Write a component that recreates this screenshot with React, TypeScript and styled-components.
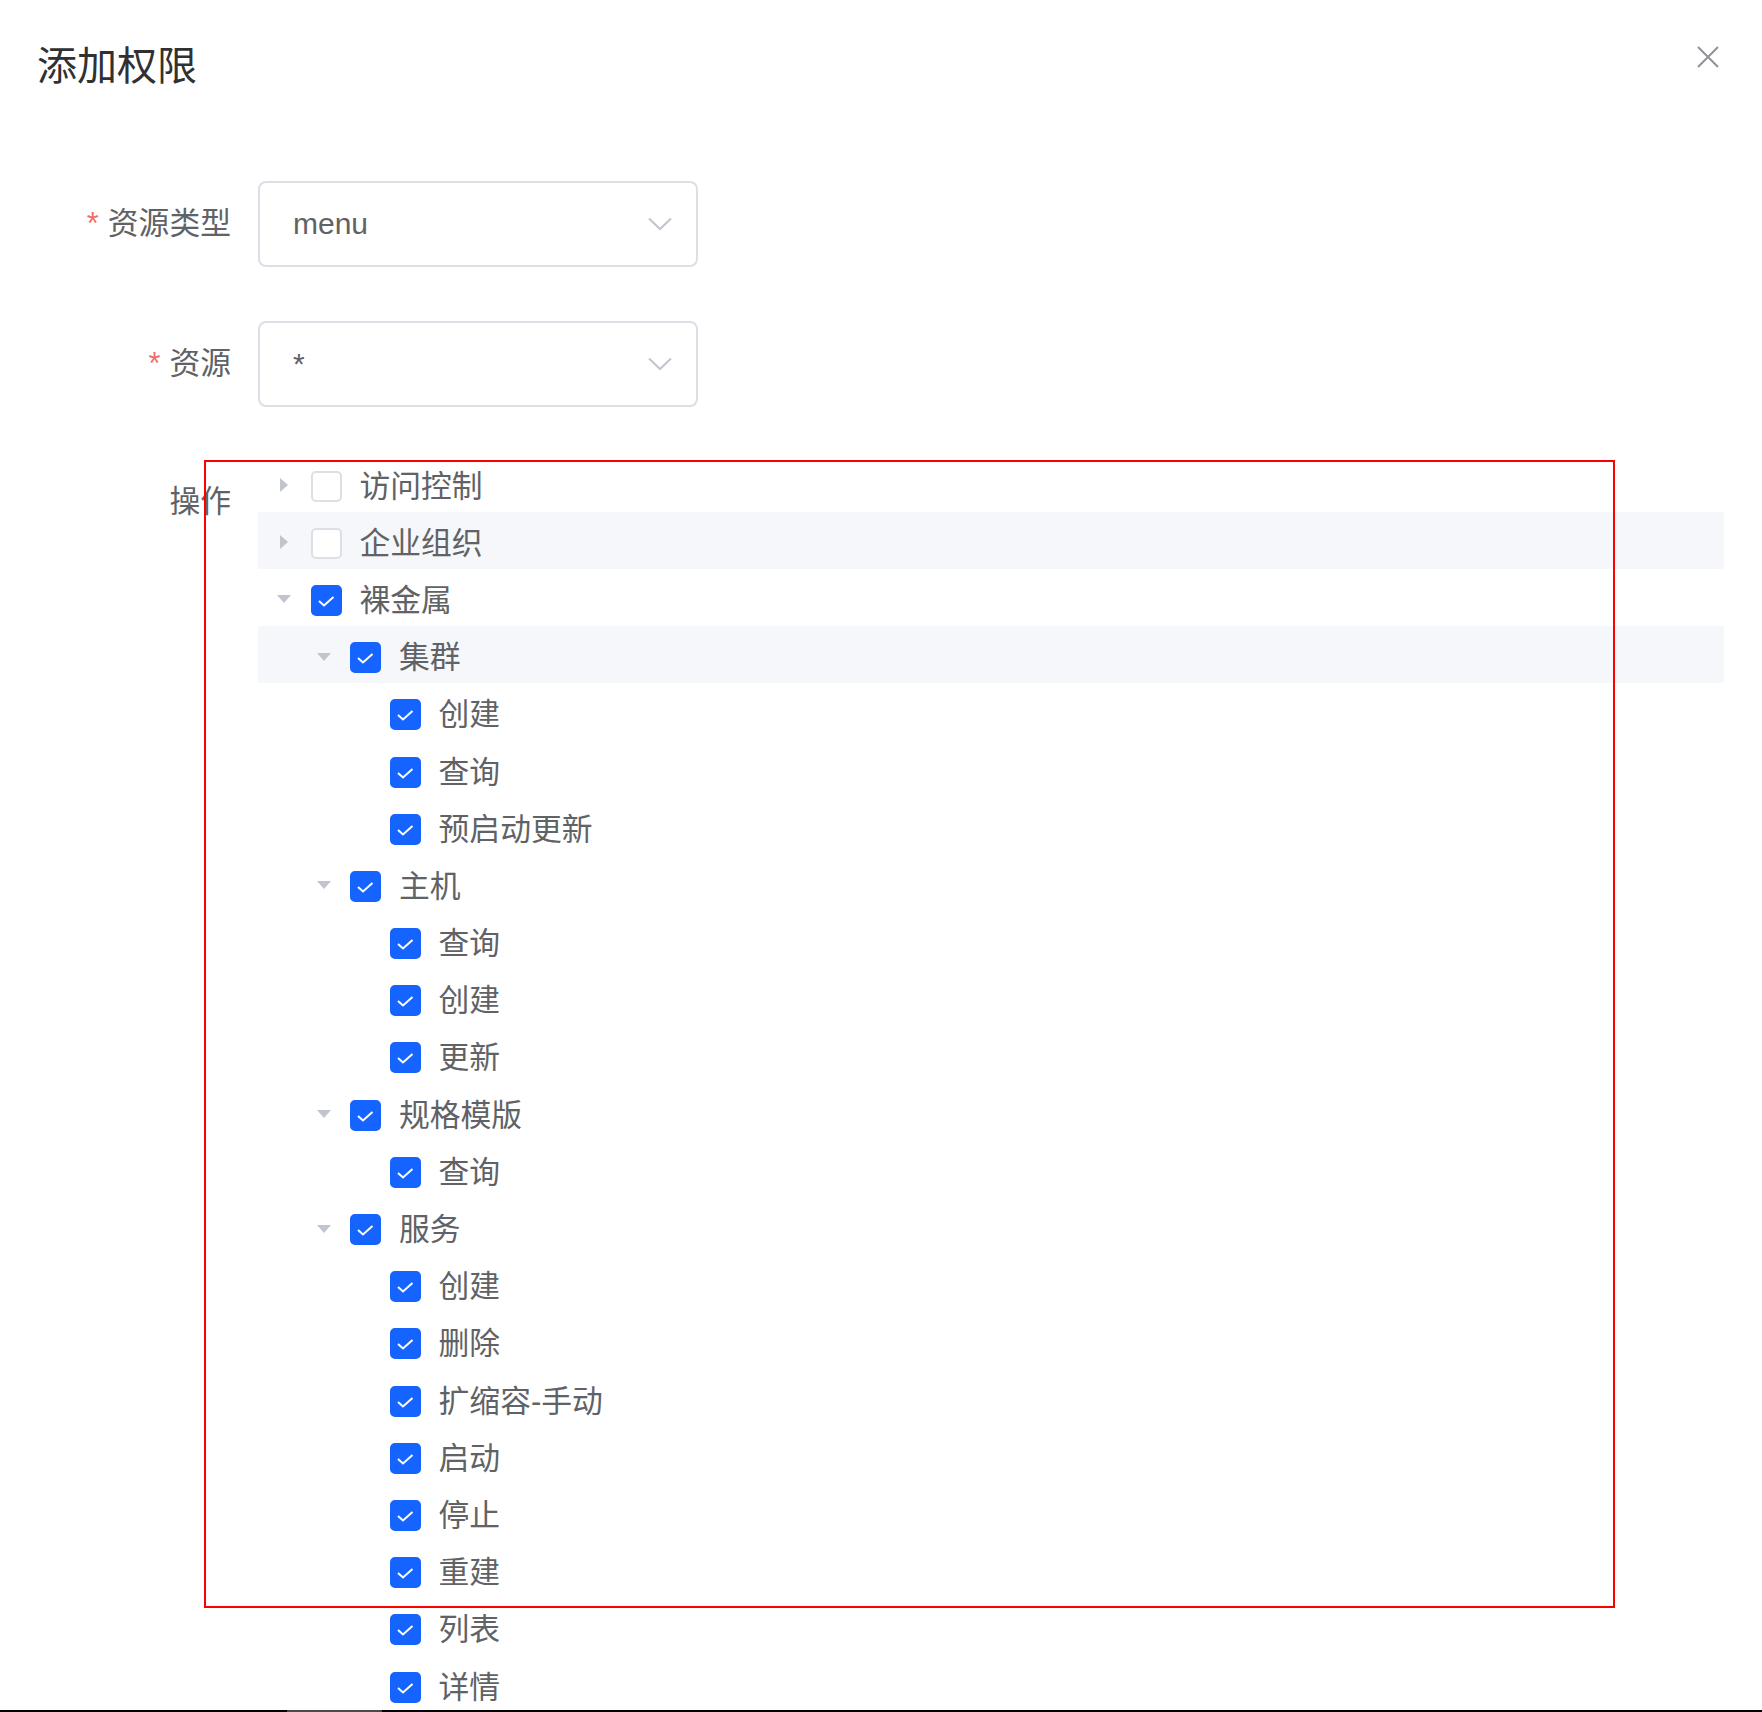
import styled, { createGlobalStyle } from 'styled-components';

const GlobalStyle = createGlobalStyle`
  html, body {
    margin: 0;
    padding: 0;
    background: #fff;
  }
  body {
    font-family: "Liberation Sans", "Noto Sans CJK SC", sans-serif;
  }
  * {
    box-sizing: border-box;
  }
`;

type TreeNode = {
  label: string;
  checked: boolean;
  expanded?: boolean;
  active?: boolean;
  children?: TreeNode[];
};

const leaf = (label: string): TreeNode => ({ label, checked: true });

const treeData: TreeNode[] = [
  { label: '访问控制', checked: false, children: [] },
  { label: '企业组织', checked: false, active: true, children: [] },
  {
    label: '裸金属',
    checked: true,
    expanded: true,
    children: [
      {
        label: '集群',
        checked: true,
        expanded: true,
        active: true,
        children: [leaf('创建'), leaf('查询'), leaf('预启动更新')],
      },
      {
        label: '主机',
        checked: true,
        expanded: true,
        children: [leaf('查询'), leaf('创建'), leaf('更新')],
      },
      {
        label: '规格模版',
        checked: true,
        expanded: true,
        children: [leaf('查询')],
      },
      {
        label: '服务',
        checked: true,
        expanded: true,
        children: [
          leaf('创建'),
          leaf('删除'),
          leaf('扩缩容-手动'),
          leaf('启动'),
          leaf('停止'),
          leaf('重建'),
          leaf('列表'),
          leaf('详情'),
        ],
      },
    ],
  },
];

const Page = styled.div`
  position: relative;
  width: 1762px;
  height: 1712px;
  overflow: hidden;
  background: #fff;
`;

const Header = styled.header`
  display: flex;
  justify-content: space-between;
  align-items: flex-start;
  padding: 38px 43px 0 37px;
`;

const Title = styled.h2`
  margin: 0;
  font-size: 40px;
  line-height: 56px;
  font-weight: 400;
  color: #303133;
`;

const CloseButton = styled.button`
  margin-top: 8px;
  width: 22px;
  height: 22px;
  padding: 0;
  border: 0;
  background: transparent;
  display: flex;
  cursor: pointer;
`;

const Form = styled.div`
  margin-top: 87px;
  padding: 0 38px 0 44px;
`;

const FormItem = styled.div<{ $gap: number }>`
  display: grid;
  grid-template-columns: 214px 1fr;
  margin-bottom: ${({ $gap }) => $gap}px;
`;

const Label = styled.label<{ $lineHeight: number }>`
  text-align: right;
  padding-right: 27px;
  font-size: 30.8px;
  line-height: ${({ $lineHeight }) => $lineHeight}px;
  color: #606266;
  white-space: nowrap;
`;

const Star = styled.span`
  color: #f56c6c;
  margin-right: 9px;
`;

const Select = styled.div`
  width: 440px;
  height: 86px;
  border: 2px solid #dcdfe6;
  border-radius: 8px;
  display: flex;
  align-items: center;
  justify-content: space-between;
  padding: 0 24px 0 33px;
  font-size: 30px;
  color: #606266;
`;

const Tree = styled.div`
  display: flex;
  flex-direction: column;
`;

const Row = styled.div<{ $level: number; $active?: boolean }>`
  display: flex;
  align-items: center;
  height: 57.2px;
  padding-left: ${({ $level }) => $level * 39.6}px;
  background: ${({ $active }) => ($active ? '#f5f7fa' : 'transparent')};
`;

const Caret = styled.span<{ $expanded?: boolean; $hidden?: boolean }>`
  width: 52.8px;
  height: 100%;
  padding-top: 4px;
  display: flex;
  align-items: center;
  justify-content: center;
  visibility: ${({ $hidden }) => ($hidden ? 'hidden' : 'visible')};

  svg {
    transform: rotate(${({ $expanded }) => ($expanded ? 90 : 0)}deg);
  }
`;

const Checkbox = styled.span<{ $checked: boolean }>`
  width: 31px;
  height: 31px;
  margin-top: 6px;
  border-radius: 5px;
  border: 2px solid ${({ $checked }) => ($checked ? '#1664ff' : '#dcdfe6')};
  background: ${({ $checked }) => ($checked ? '#1664ff' : '#fff')};
  display: flex;
  flex-shrink: 0;
`;

const NodeText = styled.span`
  margin-left: 17.6px;
  font-size: 30.8px;
  color: #606266;
  white-space: nowrap;
`;

const Annotation = styled.div`
  position: absolute;
  left: 204px;
  top: 460px;
  width: 1411px;
  height: 1148px;
  border: 2px solid #ff0000;
  pointer-events: none;
`;

const BottomBar = styled.div`
  position: absolute;
  left: 0;
  right: 0;
  bottom: 0;
  height: 2px;
  background: #000;
`;

const BarThumb = styled.div`
  margin-left: 287px;
  width: 95px;
  height: 100%;
  background: #4a4a4a;
`;

const Chevron = () => (
  <svg width="24" height="14" viewBox="0 0 24 14">
    <polyline points="1,1.5 12,12 23,1.5" fill="none" stroke="#c0c4cc" strokeWidth="2" />
  </svg>
);

const CloseIcon = () => (
  <svg width="22" height="22" viewBox="0 0 22 22">
    <path d="M1 1 L21 21 M21 1 L1 21" stroke="#909399" strokeWidth="2" fill="none" />
  </svg>
);

const CaretIcon = () => (
  <svg width="14" height="14" viewBox="0 0 14 14">
    <polygon points="3,0 11,7 3,14" fill="#c0c4cc" />
  </svg>
);

const CheckIcon = () => (
  <svg width="27" height="27" viewBox="0 0 27 27">
    <path d="M6 14 L11 18.5 L20.5 10" fill="none" stroke="#fff" strokeWidth="2" />
  </svg>
);

const renderNodes = (nodes: TreeNode[], level: number): JSX.Element[] =>
  nodes.flatMap((node, i) => {
    const isLeaf = !node.children;
    const row = (
      <Row key={`${level}-${i}-${node.label}`} $level={level} $active={node.active}>
        <Caret $expanded={node.expanded} $hidden={isLeaf}>
          <CaretIcon />
        </Caret>
        <Checkbox $checked={node.checked}>{node.checked && <CheckIcon />}</Checkbox>
        <NodeText>{node.label}</NodeText>
      </Row>
    );
    const kids =
      node.expanded && node.children ? renderNodes(node.children, level + 1) : [];
    return [row, ...kids];
  });

export default function App() {
  return (
    <Page>
      <GlobalStyle />
      <Header>
        <Title>添加权限</Title>
        <CloseButton aria-label="关闭">
          <CloseIcon />
        </CloseButton>
      </Header>

      <Form>
        <FormItem $gap={54}>
          <Label $lineHeight={86}>
            <Star>*</Star>资源类型
          </Label>
          <Select>
            <span>menu</span>
            <Chevron />
          </Select>
        </FormItem>

        <FormItem $gap={47.5}>
          <Label $lineHeight={86}>
            <Star>*</Star>资源
          </Label>
          <Select>
            <span>*</span>
            <Chevron />
          </Select>
        </FormItem>

        <FormItem $gap={0}>
          <Label $lineHeight={94}>操作</Label>
          <Tree>{renderNodes(treeData, 0)}</Tree>
        </FormItem>
      </Form>

      <Annotation />
      <BottomBar>
        <BarThumb />
      </BottomBar>
    </Page>
  );
}
